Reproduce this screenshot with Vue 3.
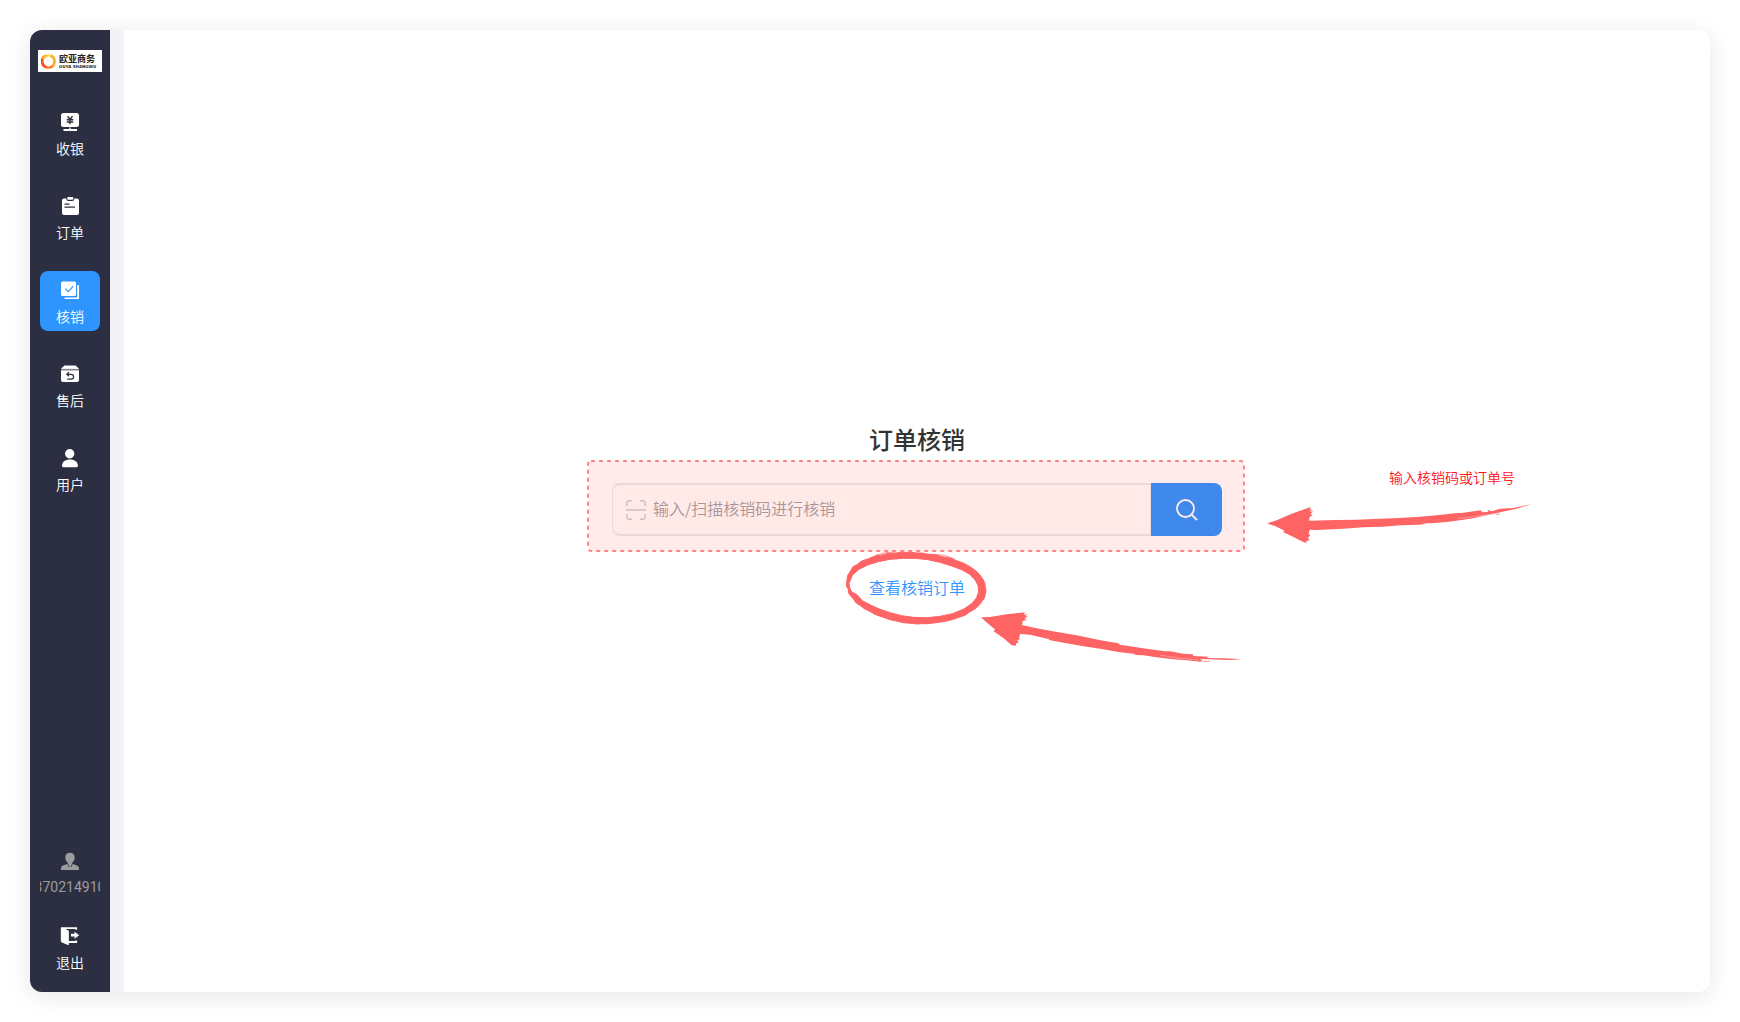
<template>
  <div class="page">
    <div class="window">
      <aside class="sidebar">
        <div class="logo">
          <svg class="logo-mark" viewBox="0 0 15 15" aria-hidden="true">
            <path d="M5.200 1.800A6 6 0 0 0 6.200 13.400" fill="none" stroke="#f4512c" stroke-width="2.8" />
            <path d="M9 1.700A6 6 0 0 1 8.600 13.400" fill="none" stroke="#fbb02c" stroke-width="2.8" />
            <path d="M1.700 5.200A6 6 0 0 1 8 1.500" fill="none" stroke="#fdc52e" stroke-width="2" />
            <path d="M5 13A6 6 0 0 0 11.500 12" fill="none" stroke="#f5792b" stroke-width="2" />
          </svg>
          <div class="logo-text">
            <span class="logo-cn">欧亚商务</span>
            <span class="logo-en">OUYA SHANGWU</span>
          </div>
        </div>

        <nav class="menu">
          <button
            v-for="item in menus"
            :key="item.key"
            type="button"
            class="menu-item"
            :class="{ active: current === item.key }"
            @click="current = item.key"
          >
            <svg class="menu-icon" viewBox="0 0 20 20" aria-hidden="true">
              <g v-if="item.key === 'cashier'">
                <rect x="1" y="1" width="18" height="14" rx="2.5" fill="#fff" />
                <path d="M9.200 15h1.600v2H17v2H3.500v-2h5.700z" fill="#fff" />
                <path d="M1.800 15.700h16.400" stroke="#2c2f42" stroke-width=".7" />
                <path d="M7.500 4.200L10 7.300l2.500-3.100M6.700 7.700h6.600M6.700 10h6.600M10 7.300v5" fill="none" stroke="#2c2f42" stroke-width="1.400" />
              </g>
              <g v-else-if="item.key === 'order'">
                <path d="M4 2.500h2.300v.500a2 2 0 0 0 2 2h4a2 2 0 0 0 2-2v-.500H17a2 2 0 0 1 2 2V17a2 2 0 0 1-2 2H4a2 2 0 0 1-2-2V4.500a2 2 0 0 1 2-2z" fill="#fff" />
                <rect x="7.200" y="1" width="6.200" height="2.800" rx="1" fill="#fff" />
                <path d="M4.500 8.200h5M4.500 11.200h10.500" stroke="#2c2f42" stroke-width="1.200" />
              </g>
              <g v-else-if="item.key === 'verify'">
                <rect x="1" y="1.500" width="15" height="14.500" rx="1.500" fill="#fff" />
                <path d="M17.200 5H19v14H4.500v-1.600h12.700z" fill="#fff" />
                <path d="M5.300 8.600l3 3 4.800-5.200" fill="none" stroke="#2e95ff" stroke-width="1.200" />
              </g>
              <g v-else-if="item.key === 'after'">
                <path d="M4.500 2h11L18.500 4.800h-17z" fill="#fff" stroke="#fff" stroke-linejoin="round" />
                <path d="M1 6.200h18V16a2 2 0 0 1-2 2H3a2 2 0 0 1-2-2z" fill="#fff" />
                <path d="M1.500 5.700h17" stroke="#8f92a0" stroke-width=".8" />
                <path d="M9 8.300L6.800 10.300 9 12.200M7 10.300h4.200a2.400 2.400 0 0 1 0 4.800H7.300" fill="none" stroke="#2c2f42" stroke-width="1.200" />
              </g>
              <g v-else>
                <circle cx="9.700" cy="5.800" r="4.700" fill="#fff" />
                <path d="M2 17.800c0-4 3.200-6.300 7.900-6.300s8 2.300 8 6.300c0 .900-.500 1.400-1.400 1.400H3.400c-.900 0-1.400-.500-1.400-1.400z" fill="#fff" />
              </g>
            </svg>
            <span class="menu-label">{{ item.label }}</span>
          </button>
        </nav>

        <div class="account">
          <button type="button" class="menu-item muted">
            <svg class="menu-icon" viewBox="0 0 20 20" aria-hidden="true">
              <path d="M10 1.800c2.900 0 4.700 1.900 4.700 4.700 0 2.400-1.400 4.400-2.600 5.300v.900l5.500 2c1 .400 1.400 1.500 1.400 4.300H1c0-2.800.400-3.900 1.400-4.300l5.500-2v-.900C6.700 10.900 5.300 8.900 5.300 6.500c0-2.800 1.800-4.700 4.700-4.700z" fill="#9c9c9c" />
              <path d="M7.600 12.800l1.500 3.200M12.400 12.800l-1.500 3.200" stroke="#2c2f42" stroke-width=".8" />
            </svg>
            <span class="menu-label">{{ phone }}</span>
          </button>
          <button type="button" class="menu-item">
            <svg class="menu-icon" viewBox="0 0 20 20" aria-hidden="true">
              <path d="M1.300 1.800L8.300 4.800V18.700L1.300 15.700z" fill="#fff" stroke="#fff" stroke-linejoin="round" />
              <path d="M1.500 2.200H16.200v1.500M16.200 14.500v1.500H8.500" fill="none" stroke="#fff" stroke-width="1.800" />
              <path d="M11 7.800h3.500V5.700l4.800 3.500-4.800 3.500v-2.100H11z" fill="#fff" />
            </svg>
            <span class="menu-label">退出</span>
          </button>
        </div>
      </aside>

      <main class="content">
        <h1 class="title">订单核销</h1>

        <div class="search-area">
          <form class="search" @submit.prevent>
            <label class="search-field">
              <svg class="scan-icon" viewBox="0 0 20 20" aria-hidden="true">
                <path d="M.8 6V3A2.200 2.200 0 0 1 3 .8H6M14 .8h3A2.200 2.200 0 0 1 19.200 3v3M19.200 14v3a2.200 2.200 0 0 1-2.200 2.200h-3M6 19.200H3A2.200 2.200 0 0 1 .8 17v-3M0 10h20" />
              </svg>
              <input v-model="code" type="text" aria-label="核销码" placeholder="输入/扫描核销码进行核销" />
            </label>
            <button type="submit" class="search-btn" aria-label="搜索">
              <svg viewBox="0 0 22 22" aria-hidden="true">
                <circle cx="9.500" cy="9.500" r="8.500" />
                <path d="M15.500 15.500l5.500 5.500" />
              </svg>
            </button>
          </form>

          <!-- guide marks -->
          <svg class="frame" aria-hidden="true">
            <rect class="frame-line" x="1" y="1" rx="3" />
          </svg>
          <svg class="mark ring" viewBox="0 0 600 300" aria-hidden="true">
            <path
              class="ring-line"
              fill-rule="evenodd"
              d="M35 125L38 106 46 94 54 80 66 74 80 63 98 57 120 48 140 45 160 40 182 39 200 37 212 37 230 37 245 39 262 39 275 42 300 44 322 50 345 54 365 62 385 69 405 80 422 92 434 104 442 115 449 128 451 142 453 150 451 164 447 176 441 184 432 196 418 208 402 217 390 226 372 232 355 238 335 243 318 246 296 249 280 251 262 251 248 252 228 250 205 248 188 244 165 239 142 231 122 224 104 214 88 206 78 198 62 188 56 178 47 168 40 158 40 148 35 140z
                 M42 130L44 143 50 156 66 164 82 182 108 196 135 208 165 218 200 227 235 232 275 233 315 229 352 221 385 208 410 191 425 173 431 154 429 136 420 119 403 102 380 89 350 78 315 67 278 59 240 55 205 55 165 58 130 65 98 75 72 88 53 104z"
            />
            <path class="scratch" d="M35 140L40 112 58 88M36 132L43 108 62 80M120 46L150 38 175 36M300 43l28 3 30 10" />
          </svg>
          <svg class="mark arrow-link" viewBox="0 0 870 240" aria-hidden="true">
            <path d="M33 52L60 51 110 43 165 37 161 44 173 42 165 49 174 49 163 56 170 60 158 63 156 75 200 85 240 92 280 99 320 106 370 116 400 122 445 130 450 134 500 142 540 148 585 154 600 154 640 161 668 163 670 168 716 170 710 174 760 175 816 178 780 180 720 178 690 177 698 182 690 185 650 181 610 178 560 172 520 166 498 165 490 161 445 156 400 148 340 139 285 129 240 121 235 117 180 104 150 102 147 120 142 120 146 129 138 130 138 137 125 136 100 114 70 93 76 89 45 63z" />
            <path class="scratch" d="M700 184h20" />
            <path class="scratch light" d="M572 166l50 8 65 6" />
          </svg>
          <svg class="mark arrow-input" viewBox="0 0 900 330" aria-hidden="true">
            <path d="M54 219L80 211 125 191 182 171 179 179 187 177 180 185 190 184 181 192 188 195 179 201 178 212 260 210 320 209 370 207 430 205 500 201 560 196 615 190 640 188 692 181 697 187 715 185 712 180 725 184 750 176 790 174 845 162 800 176 750 187 730 192 700 198 670 205 635 210 590 216 545 220 530 220 510 224 450 226 400 230 340 232 280 236 200 240 179 239 176 250 181 258 174 262 178 271 169 273 170 279 160 276 130 261 99 246 104 242 75 228 55 222z" />
            <path class="scratch" d="M738 194l12-3" />
            <path class="scratch light" d="M625 205l58-6 50-8" />
          </svg>
          <span class="note">输入核销码或订单号</span>
        </div>

        <a href="#" class="order-link">查看核销订单</a>
      </main>
    </div>
  </div>
</template>

<script setup>
import { ref } from 'vue';

const menus = [
  { key: 'cashier', label: '收银' },
  { key: 'order', label: '订单' },
  { key: 'verify', label: '核销' },
  { key: 'after', label: '售后' },
  { key: 'user', label: '用户' },
];

const current = ref('verify');
const phone = ref('13702149100');
const code = ref('');
</script>

<style>
body {
  margin: 0;
  background: #fff;
}
</style>

<style scoped>
.page {
  box-sizing: border-box;
  height: 100vh;
  padding: 30px;
  font-family: "Noto Sans CJK SC", sans-serif;
  font-weight: 350;
}

.window {
  display: flex;
  height: 100%;
  border-radius: 12px;
  background: #f3f2f8;
  box-shadow: 0 4px 24px rgba(0, 0, 0, 0.1);
  overflow: hidden;
}

.sidebar {
  box-sizing: border-box;
  display: flex;
  flex-direction: column;
  align-items: center;
  flex: none;
  width: 80px;
  padding: 20px 0 15px;
  background: #2c2f42;
}

.logo {
  display: flex;
  align-items: center;
  gap: 3px;
  box-sizing: border-box;
  width: 64px;
  height: 22px;
  padding-left: 3px;
  background: #fff;
}

.logo-mark {
  flex: none;
  width: 15px;
  height: 15px;
}

.logo-text {
  display: flex;
  flex-direction: column;
  color: #2b2523;
  font-weight: bold;
  white-space: nowrap;
}

.logo-cn {
  font-size: 9px;
  line-height: 10px;
}

.logo-en {
  font-family: "DejaVu Sans", sans-serif;
  font-size: 4px;
  line-height: 5px;
}

.menu {
  display: flex;
  flex-direction: column;
  gap: 24px;
  margin-top: 31px;
}

.account {
  display: flex;
  flex-direction: column;
  gap: 15px;
  margin-top: auto;
}

.menu-item {
  display: flex;
  flex-direction: column;
  align-items: center;
  gap: 6px;
  box-sizing: border-box;
  width: 60px;
  height: 60px;
  padding: 9px 0 5px;
  border: 0;
  border-radius: 8px;
  background: none;
  color: #fff;
  font-family: inherit;
  font-size: 14px;
  font-weight: inherit;
  line-height: 20px;
  overflow: hidden;
  cursor: pointer;
}

.menu-item.active {
  background: #2e95ff;
}

.menu-item.muted {
  color: #9c9c9c;
  font-family: Roboto, sans-serif;
  font-weight: 400;
}

.menu-icon {
  flex: none;
  width: 20px;
  height: 20px;
}

.menu-label {
  white-space: nowrap;
}

.content {
  display: flex;
  flex: 1;
  flex-direction: column;
  align-items: center;
  justify-content: center;
  margin-left: 14px;
  background: #fff;
}

.title {
  margin: 0 0 26px;
  color: #333;
  font-size: 24px;
  font-weight: 500;
  line-height: 36px;
}

.search-area {
  position: relative;
  width: 610px;
}

.search {
  display: flex;
  height: 53px;
}

.search-field {
  display: flex;
  flex: 1;
  align-items: center;
  gap: 7px;
  padding-left: 13px;
  border: 2px solid #ebebeb;
  border-width: 2px 1px;
  border-radius: 8px 0 0 8px;
  background: #fffefc;
}

.scan-icon {
  flex: none;
  width: 20px;
  height: 20px;
  fill: none;
  stroke: #cfcfcf;
  stroke-width: 1.4;
}

.search-field input {
  flex: 1;
  min-width: 0;
  padding: 0 0 3px;
  border: 0;
  outline: 0;
  background: none;
  color: #333;
  font-family: inherit;
  font-size: 16px;
  font-weight: inherit;
  line-height: 24px;
}

.search-field input::placeholder {
  color: #a3a3a3;
  opacity: 1;
}

.search-btn {
  display: flex;
  align-items: center;
  justify-content: center;
  width: 71px;
  padding: 0;
  border: 0;
  border-radius: 0 8px 8px 0;
  background: #2e95ff;
  cursor: pointer;
}

.search-btn svg {
  width: 22px;
  height: 22px;
  fill: none;
  stroke: #fff;
  stroke-width: 1.8;
}

.order-link {
  margin: 39px 0 2px;
  color: #2e95ff;
  font-size: 16px;
  line-height: 24px;
  text-decoration: none;
}

/* guide marks lie over the search area */
.frame,
.mark,
.note {
  position: absolute;
  pointer-events: none;
}

.frame {
  top: -23px;
  left: -25px;
  width: 658px;
  height: 92px;
}

.frame-line {
  width: calc(100% - 2px);
  height: calc(100% - 2px);
  fill: rgba(255, 0, 0, 0.08);
  stroke: #ff8484;
  stroke-width: 2;
  stroke-dasharray: 4 4;
}

.mark {
  fill: #ff6464;
}

.ring-line {
  stroke: #ff6464;
  stroke-width: 3;
  stroke-linejoin: round;
}

.scratch {
  fill: none;
  stroke: #ff6464;
  stroke-width: 2;
}

.scratch.light {
  stroke: #fff;
  stroke-width: 1;
}

.ring {
  top: 57px;
  left: 223px;
  width: 200px;
  height: 100px;
}

.arrow-link {
  top: 117px;
  left: 358px;
  width: 290px;
  height: 80px;
}

.arrow-input {
  top: -33px;
  left: 638px;
  width: 300px;
  height: 110px;
}

.note {
  top: -16px;
  left: 777px;
  color: #ff1414;
  font-size: 14px;
  line-height: 20px;
  white-space: nowrap;
}
</style>
